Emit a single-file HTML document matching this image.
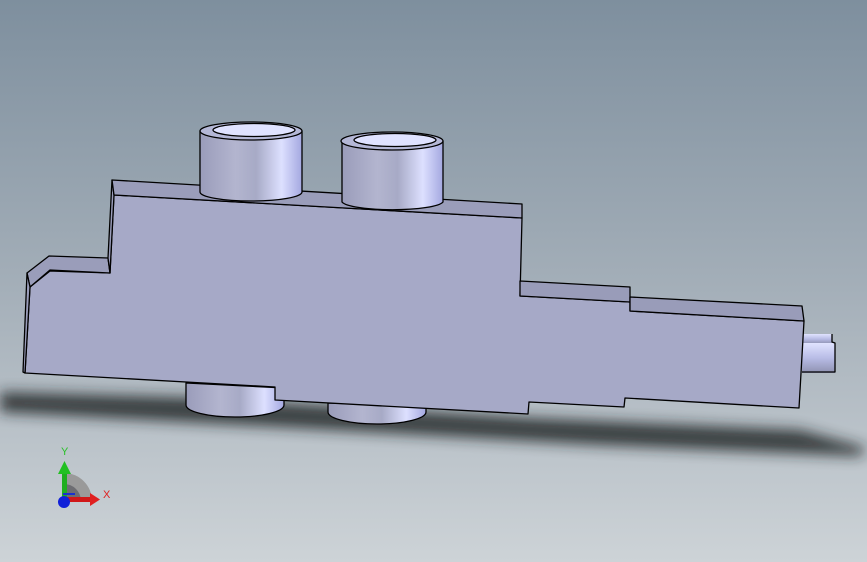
<!DOCTYPE html>
<html><head><meta charset="utf-8"><style>
html,body{margin:0;padding:0;width:867px;height:562px;overflow:hidden}
</style></head><body>
<svg width="867" height="562" viewBox="0 0 867 562" xmlns="http://www.w3.org/2000/svg" style="display:block">
<defs>
<linearGradient id="bg" x1="0" y1="0" x2="0" y2="1">
<stop offset="0" stop-color="#7e8f9e"/><stop offset="0.5" stop-color="#a3aeb8"/><stop offset="1" stop-color="#cdd3d7"/>
</linearGradient>
<linearGradient id="cyl" x1="0" y1="0" x2="1" y2="0">
<stop offset="0" stop-color="#9a9cba"/><stop offset="0.35" stop-color="#b3b5cf"/><stop offset="0.55" stop-color="#a7aac6"/><stop offset="0.8" stop-color="#dde0ff"/><stop offset="1" stop-color="#a4a8e0"/>
</linearGradient>
<linearGradient id="pin" x1="0" y1="0" x2="0" y2="1">
<stop offset="0" stop-color="#e0e3ff"/><stop offset="0.5" stop-color="#b8bce6"/><stop offset="1" stop-color="#8e91b0"/>
</linearGradient>
<filter id="bl" x="-10%" y="-200%" width="120%" height="500%"><feGaussianBlur stdDeviation="7"/></filter>
</defs>
<rect width="867" height="562" fill="url(#bg)"/>
<polygon points="0,392 200,398 530,418 800,430 867,448 860,456 600,445 300,428 0,412" fill="#1e2024" filter="url(#bl)" opacity="0.82"/>
<g stroke="#000" stroke-width="1.3" stroke-linejoin="round">
<path d="M186,383 L186,405 A49,12 0 0 0 284,405 L284,388 Z" fill="url(#cyl)"/>
<path d="M328,403 L328,412 A49,12 0 0 0 426,412 L426,406 Z" fill="url(#cyl)"/>
<rect x="802" y="334" width="30" height="10" fill="url(#pin)" stroke="none"/>
<rect x="802" y="343" width="33" height="30" fill="url(#pin)" stroke="none"/>
<path d="M832,334 L832,342 L835,343 L835,372 L802,372" fill="none"/>
<polygon points="30,287 50,271 110,273 114,195 522,218 520,296 630,302 630,311 804,321 799,408 625,398 624,407 529,402 528,414 275,400 275,387 25,373" fill="#a6a9c7"/>
<polygon points="27,273 49,256 108,258 110,273 50,270 30,287" fill="#9a9dba"/>
<polygon points="108,258 112,180 114,195 110,273" fill="#9a9dba"/>
<polygon points="112,180 522,204 522,218 114,195" fill="#9a9dba"/>
<polygon points="520,281 630,287 630,302 520,296" fill="#999cb9"/>
<polygon points="630,297 802,306 804,321 630,311" fill="#999cb9"/>
<polygon points="27,273 30,287 25,373 23,372" fill="#9a9dba"/>
<path d="M200,131 L200,192 A51,9 0 0 0 302,192 L302,131 Z" fill="url(#cyl)"/>
<ellipse cx="251" cy="131" rx="51" ry="9" fill="#b4b7d6"/>
<ellipse cx="254" cy="130" rx="41" ry="6.5" fill="#dfe2ff"/>
<path d="M342,141 L342,202 A51,9 0 0 0 443,202 L443,141 Z" fill="url(#cyl)"/>
<ellipse cx="392" cy="141" rx="51" ry="9" fill="#b4b7d6"/>
<ellipse cx="395" cy="140" rx="41" ry="6.5" fill="#dfe2ff"/>
</g>
<path d="M64,501 L64,473 A28,28 0 0 1 92,501 Z" fill="#9a9a9a"/>
<path d="M64,501 L64,484 A17,17 0 0 1 81,501 Z" fill="#6d6d72"/>
<rect x="62" y="472" width="5" height="30" fill="#1fae1f"/>
<polygon points="58,474 64.5,461 71,474" fill="#22c022"/>
<rect x="64" y="497" width="28" height="5" fill="#d01818"/>
<polygon points="90,493 100,499.5 90,506" fill="#e02020"/>
<rect x="63" y="493" width="12" height="2" fill="#1a2fd0"/>
<circle cx="64" cy="502" r="6" fill="#1020d8"/>
<text x="61" y="455" font-family="Liberation Sans,sans-serif" font-size="11" fill="#2ac02a">Y</text>
<text x="103" y="498" font-family="Liberation Sans,sans-serif" font-size="11" fill="#e02020">X</text>
</svg>
</body></html>
